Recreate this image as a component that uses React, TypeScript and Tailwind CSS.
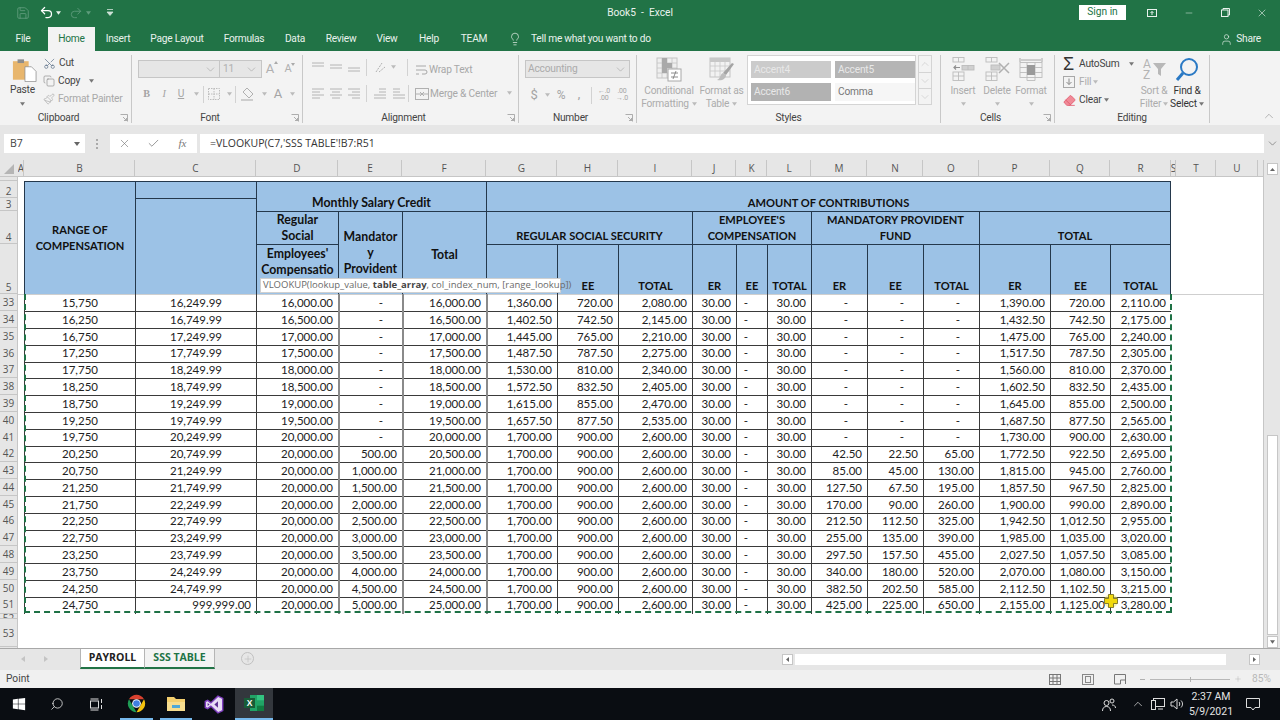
import React from "react";
import { Scissors, Copy, Paintbrush, Undo2, Redo2, Save, Lightbulb, User, X, Check, Search, Minus, Plus, ChevronUp, ChevronDown, Eraser } from "lucide-react";
import { FaWindows } from "react-icons/fa";

const Caret = ({ c = "#777", w = 6 }: { c?: string; w?: number }) => (
  <svg width={w} height={4} viewBox="0 0 6 4" className="shrink-0"><path d="M0 0h6L3 4z" fill={c} /></svg>
);

const Lines = ({ rows, w = 14, h = 12, c = "#b4b4b4" }: { rows: number[][]; w?: number; h?: number; c?: string }) => (
  <svg width={w} height={h} viewBox={`0 0 ${w} ${h}`} className="shrink-0">
    {rows.map((r, i) => <line key={i} x1={r[0]} x2={r[1]} y1={r[2]} y2={r[2]} stroke={c} strokeWidth="1" />)}
  </svg>
);

const Sep = () => <div className="w-px h-[17px] bg-[#d2d2d2] shrink-0" />;

const Group = ({ cls, label, launcher = true, children }: { cls: string; label: string; launcher?: boolean; children: React.ReactNode }) => (
  <div className={`flex flex-col shrink-0 h-[68px] mt-[4px] border-r border-[#c8c8c8] ${cls}`}>
    <div className="h-[56px] flex">{children}</div>
    <div className="h-[12px] flex items-center translate-y-[1px]">
      <div className="flex-1 text-center text-[10.2px] leading-none text-[#444]">{label}</div>
      {launcher && (
        <div className="w-[14px] flex justify-center">
          <svg width="8" height="8" viewBox="0 0 8 8"><path d="M.5 .5h7v7M3 3l3.5 3.5M6.5 4v2.5H4" fill="none" stroke="#9a9a9a" strokeWidth=".8" /></svg>
        </div>
      )}
    </div>
  </div>
);

const BigBtn = ({ cls, icon, l1, l2, caret2, caretRow }: { cls: string; icon: React.ReactNode; l1: string; l2?: string; caret2?: boolean; caretRow?: boolean }) => (
  <div className={`flex flex-col items-center shrink-0 ${cls}`}>
    <div className="h-[29px] pt-[2px] flex items-start justify-center">{icon}</div>
    <div className="h-[13px] leading-[13px] text-[10.2px] text-[#acacac] whitespace-nowrap">{l1}</div>
    {l2 && (
      <div className="h-[13px] leading-[13px] text-[10.2px] text-[#acacac] whitespace-nowrap flex items-center gap-[3px]">{l2}{caret2 && <Caret c="#bbb" w={5} />}</div>
    )}
    {caretRow && <div className="h-[13px] flex items-center"><Caret c="#bbb" w={5} /></div>}
  </div>
);

const Slot = ({ cls, children }: { cls: string; children: React.ReactNode }) => (
  <div className={`flex items-center justify-center shrink-0 h-[18px] ${cls}`}>{children}</div>
);

const CondIcon = () => (
  <svg width="26" height="25" viewBox="0 0 26 25">
    <rect x="1" y="1" width="20" height="20" fill="#efefef" stroke="#c4c4c4" />
    <path d="M1 6h20M1 11h20M1 16h20M6 1v20M11 1v20M16 1v20" stroke="#c4c4c4" strokeWidth=".8" />
    <rect x="6" y="1" width="5" height="15" fill="#a9a9a9" /><rect x="11" y="6" width="5" height="5" fill="#a9a9a9" />
    <rect x="12" y="12" width="13" height="12" fill="#fff" stroke="#a8a8a8" />
    <path d="M15 16h7M15 20h7M20 14l-3 8" stroke="#808080" strokeWidth=".9" />
  </svg>
);
const TableIcon = () => (
  <svg width="26" height="25" viewBox="0 0 26 25">
    <rect x="1" y="1" width="20" height="19" fill="#f2f2f2" stroke="#c4c4c4" />
    <rect x="1" y="1" width="20" height="4" fill="#c8c8c8" />
    <path d="M1 9h20M1 14h20M6 1v19M11 1v19M16 1v19" stroke="#c8c8c8" strokeWidth=".8" />
    <path d="M25 7l-2-1-9 10 3 2z" fill="#a4a4a4" /><path d="M14 16c-3 1-2 5-6 7 5 1 9-1 9-5z" fill="#bdbdbd" />
  </svg>
);
const InsIcon = () => (
  <svg width="24" height="24" viewBox="0 0 24 24" fill="none" stroke="#bcbcbc" strokeWidth=".9">
    <rect x="2" y=".5" width="11" height="4.5" /><path d="M7.500 .5v4.500" />
    <path d="M9 10.500H3M5 8.500l-2 2 2 2" stroke="#8f8f8f" strokeWidth="1.2" />
    <rect x="11" y="8.500" width="12" height="4.500" fill="#d0d0d0" /><path d="M17 8.500v4.500" />
    <rect x="2" y="15" width="11" height="8.500" /><path d="M7.500 15v8.500M2 19h11" />
  </svg>
);
const DelIcon = () => (
  <svg width="26" height="24" viewBox="0 0 26 24" fill="none" stroke="#bcbcbc" strokeWidth=".9">
    <rect x="2" y=".5" width="11" height="4.500" /><path d="M7.500 .5v4.500" />
    <rect x="7" y="8" width="9" height="5" fill="#d0d0d0" />
    <path d="M15 6l10 10M25 6L15 16" stroke="#b0b0b0" strokeWidth="1.500" />
    <rect x="2" y="15" width="11" height="8.500" /><path d="M7.500 15v8.500M2 19h11" />
  </svg>
);
const FmtIcon = () => (
  <svg width="24" height="25" viewBox="0 0 24 25" fill="none" stroke="#bcbcbc" strokeWidth=".9">
    <path d="M1 1v4M23 1v4M2 3h20" stroke="#9f9f9f" />
    <rect x="1" y="5.500" width="22" height="15" /><path d="M8 5.500v15M16 5.500v15M1 10.500h22M1 15.500h22" />
    <rect x="8" y="8" width="8" height="10" fill="#9a9a9a" stroke="none" />
    <path d="M8 20.500v3h8v-3" />
  </svg>
);

const ROWS: string[][] = [
  ["33","15,750","16,249.99","16,000.00","-","16,000.00","1,360.00","720.00","2,080.00","-","-","-","1,390.00","720.00","2,110.00"],
  ["34","16,250","16,749.99","16,500.00","-","16,500.00","1,402.50","742.50","2,145.00","-","-","-","1,432.50","742.50","2,175.00"],
  ["35","16,750","17,249.99","17,000.00","-","17,000.00","1,445.00","765.00","2,210.00","-","-","-","1,475.00","765.00","2,240.00"],
  ["36","17,250","17,749.99","17,500.00","-","17,500.00","1,487.50","787.50","2,275.00","-","-","-","1,517.50","787.50","2,305.00"],
  ["37","17,750","18,249.99","18,000.00","-","18,000.00","1,530.00","810.00","2,340.00","-","-","-","1,560.00","810.00","2,370.00"],
  ["38","18,250","18,749.99","18,500.00","-","18,500.00","1,572.50","832.50","2,405.00","-","-","-","1,602.50","832.50","2,435.00"],
  ["39","18,750","19,249.99","19,000.00","-","19,000.00","1,615.00","855.00","2,470.00","-","-","-","1,645.00","855.00","2,500.00"],
  ["40","19,250","19,749.99","19,500.00","-","19,500.00","1,657.50","877.50","2,535.00","-","-","-","1,687.50","877.50","2,565.00"],
  ["41","19,750","20,249.99","20,000.00","-","20,000.00","1,700.00","900.00","2,600.00","-","-","-","1,730.00","900.00","2,630.00"],
  ["42","20,250","20,749.99","20,000.00","500.00","20,500.00","1,700.00","900.00","2,600.00","42.50","22.50","65.00","1,772.50","922.50","2,695.00"],
  ["43","20,750","21,249.99","20,000.00","1,000.00","21,000.00","1,700.00","900.00","2,600.00","85.00","45.00","130.00","1,815.00","945.00","2,760.00"],
  ["44","21,250","21,749.99","20,000.00","1,500.00","21,500.00","1,700.00","900.00","2,600.00","127.50","67.50","195.00","1,857.50","967.50","2,825.00"],
  ["45","21,750","22,249.99","20,000.00","2,000.00","22,000.00","1,700.00","900.00","2,600.00","170.00","90.00","260.00","1,900.00","990.00","2,890.00"],
  ["46","22,250","22,749.99","20,000.00","2,500.00","22,500.00","1,700.00","900.00","2,600.00","212.50","112.50","325.00","1,942.50","1,012.50","2,955.00"],
  ["47","22,750","23,249.99","20,000.00","3,000.00","23,000.00","1,700.00","900.00","2,600.00","255.00","135.00","390.00","1,985.00","1,035.00","3,020.00"],
  ["48","23,250","23,749.99","20,000.00","3,500.00","23,500.00","1,700.00","900.00","2,600.00","297.50","157.50","455.00","2,027.50","1,057.50","3,085.00"],
  ["49","23,750","24,249.99","20,000.00","4,000.00","24,000.00","1,700.00","900.00","2,600.00","340.00","180.00","520.00","2,070.00","1,080.00","3,150.00"],
  ["50","24,250","24,749.99","20,000.00","4,500.00","24,500.00","1,700.00","900.00","2,600.00","382.50","202.50","585.00","2,112.50","1,102.50","3,215.00"],
  ["51","24,750","999,999.00","20,000.00","5,000.00","25,000.00","1,700.00","900.00","2,600.00","425.00","225.00","650.00","2,155.00","1,125.00","3,280.00"],
];

const GRID = "grid grid-cols-[18px_6px_111px_121px_82px_64px_84px_71px_61px_74px_44px_31px_44px_56px_56px_56px_71px_60px_61px]";

const Letters: [string, string][] = [
  ["A","w-[6px]"],["B","w-[111px]"],["C","w-[121px]"],["D","w-[82px]"],["E","w-[64px]"],["F","w-[84px]"],["G","w-[71px]"],["H","w-[61px]"],["I","w-[74px]"],["J","w-[44px]"],["K","w-[31px]"],["L","w-[44px]"],["M","w-[56px]"],["N","w-[56px]"],["O","w-[56px]"],["P","w-[71px]"],["Q","w-[60px]"],["R","w-[61px]"],["S","w-[5px]"],["T","w-[40px]"],["U","w-[42px]"],
];

const Num = ({ v, last, grey }: { v: string; last: boolean; grey?: boolean }) => (
  <div className={`${grey ? "border-l-[2px] border-[#8a8a8a]" : "border-l border-[#3a3a3a]"} ${last ? "" : "shadow-[0_1px_0_#3a3a3a]"} flex items-center justify-end overflow-hidden ${v === "-" ? "pr-[19px]" : "pr-[5px]"}`}>{v}</div>
);

const Ctr = ({ v, last }: { v: string; last: boolean }) => (
  <div className={`border-l border-[#3a3a3a] ${last ? "" : "shadow-[0_1px_0_#3a3a3a]"} flex items-center justify-center`}>{v}</div>
);

const RH = ({ n, cls }: { n: string; cls: string }) => (
  <div className={`bg-[#e6e6e6] border-b border-r border-[#c6c6c6] text-[10px] text-[#555] flex justify-center leading-none overflow-hidden font-['Open_Sans',sans-serif] ${cls}`}>{n}</div>
);

const H = "bg-[#9cc2e6] border-l border-t border-[#24384c] flex flex-col items-center text-center font-bold leading-[16px] text-[#111] text-[12.3px]";
const U = "bg-[#9cc2e6] border-l border-t border-[#24384c] flex flex-col items-center text-center font-bold leading-[16px] text-[#111] text-[11.1px]";

export default function App() {
  return (
    <div className="w-[1280px] h-[720px] overflow-hidden flex flex-col bg-white font-['Roboto',sans-serif] text-[#444]">
      {/* Title bar */}
      <div className="h-[25px] shrink-0 bg-[#217346] grid grid-cols-[1fr_auto_1fr] items-center text-[#e9f2ed]">
        <div className="flex items-center pl-[16px]">
          <Save size={14} strokeWidth={1.3} className="text-[#6aa386]" />
          <div className="w-[9px]" />
          <Undo2 size={15} strokeWidth={2} className="text-white" />
          <div className="ml-[2px]"><Caret c="#e9f2ed" w={5} /></div>
          <div className="w-[8px]" />
          <Redo2 size={14} strokeWidth={1.5} className="text-[#5f9c7d]" />
          <div className="ml-[3px]"><Caret c="#5f9c7d" w={5} /></div>
          <div className="w-[15px]" />
          <svg width="8" height="7" viewBox="0 0 8 7"><path d="M1 .5h6M1 3h6L4 6.500z" stroke="#cfe2d8" fill="#cfe2d8" strokeWidth=".8" /></svg>
        </div>
        <div className="text-[10.2px] whitespace-pre">Book5  -  Excel</div>
        <div className="flex items-center justify-end">
          <div className="w-[47px] h-[15px] bg-white text-[#217346] text-[10.2px] flex items-center justify-center leading-none">Sign in</div>
          <div className="w-[21px]" />
          <svg width="10" height="8" viewBox="0 0 10 8" fill="none" stroke="#e9f2ed"><rect x=".5" y=".5" width="9" height="7" /><path d="M5 6V2.500M3.500 4L5 2.500 6.500 4" /></svg>
          <div className="w-[27px]" />
          <Minus size={10} strokeWidth={1.2} />
          <div className="w-[27px]" />
          <svg width="9" height="9" viewBox="0 0 9 9" fill="none" stroke="#e9f2ed"><rect x=".5" y="2" width="6.500" height="6.500" /><path d="M2 2V.5h6.500V7H7" /></svg>
          <div className="w-[26px]" />
          <X size={12} strokeWidth={1.2} />
          <div className="w-[12px]" />
        </div>
      </div>

      {/* Tabs */}
      <div className="h-[26px] shrink-0 bg-[#217346] pt-[2px] flex items-stretch text-[10.2px] tracking-[-0.25px] text-[#e9f2ed] whitespace-nowrap">
        <div className="w-[46px] flex items-center justify-center">File</div>
        <div className="w-[2px]" />
        <div className="w-[47px] bg-[#f3f3f3] text-[#217346] flex items-center justify-center">Home</div>
        <div className="w-[46px] flex items-center justify-center">Insert</div>
        <div className="w-[72px] flex items-center justify-center">Page Layout</div>
        <div className="w-[62px] flex items-center justify-center">Formulas</div>
        <div className="w-[40px] flex items-center justify-center">Data</div>
        <div className="w-[52px] flex items-center justify-center">Review</div>
        <div className="w-[40px] flex items-center justify-center">View</div>
        <div className="w-[44px] flex items-center justify-center">Help</div>
        <div className="w-[46px] flex items-center justify-center">TEAM</div>
        <div className="w-[11px]" />
        <div className="flex items-center"><Lightbulb size={14} strokeWidth={1.2} /></div>
        <div className="w-[9px]" />
        <div className="flex items-center">Tell me what you want to do</div>
        <div className="flex-1" />
        <div className="flex items-center gap-[3px] pr-[19px]"><User size={13} strokeWidth={1.2} />Share</div>
      </div>

      {/* Ribbon */}
      <div className="h-[74px] shrink-0 bg-[#f3f3f3] flex text-[10.2px] tracking-[-0.2px]">
        <Group cls="w-[132px]" label="Clipboard">
          <div className="w-[43px] pl-[2px] flex flex-col items-center">
            <svg width="25" height="24" viewBox="0 0 27 25" className="mt-[3px] ml-[3px]">
              <rect x="1" y="3" width="17" height="20" fill="#e8b66d" />
              <rect x="6" y="1" width="7" height="4" fill="#8d8d8d" />
              <path d="M14 9h7l5 5v11H14z" fill="#fff" stroke="#8b8b8b" strokeWidth=".8" />
            </svg>
            <div className="leading-none mt-[3px] text-[#444]">Paste</div>
            <div className="mt-[7px]"><Caret c="#777" w={5} /></div>
          </div>
          <div className="flex flex-col -mt-[1px] whitespace-nowrap">
            <div className="h-[18px] flex items-center gap-[3px]"><Scissors size={13} strokeWidth={1.1} className="text-[#49617c] -rotate-90" /><span>Cut</span></div>
            <div className="h-[18px] flex items-center gap-[3px]"><Copy size={12} strokeWidth={1.1} className="text-[#777]" /><span>Copy</span><span className="ml-[6px]"><Caret w={5} /></span></div>
            <div className="h-[18px] flex items-center gap-[3px] text-[#a8a8a8]"><Paintbrush size={12} strokeWidth={1.3} /><span>Format Painter</span></div>
          </div>
        </Group>

        <Group cls="w-[171px]" label="Font">
          <div className="pl-[6px] flex flex-col">
            <div className="flex items-center mt-[5px] h-[18px]">
              <div className="w-[82px] h-[18px] bg-[#e6e6e6] border border-[#c6c6c6] flex items-center justify-end pr-[2px]"><ChevronDown size={13} strokeWidth={1} className="text-[#999]" /></div>
              <div className="w-[42px] h-[18px] bg-[#e6e6e6] border border-l-0 border-[#c6c6c6] flex items-center justify-between px-[3px] text-[#b0b0b0]">11<ChevronDown size={13} strokeWidth={1} className="text-[#999]" /></div>
              <div className="w-[18px] ml-[1px] flex justify-center items-start text-[13px] text-[#b0b0b0]">A<svg width="4" height="3" viewBox="0 0 4 3" className="mt-[2px]"><path d="M0 3l2-3 2 3" fill="#aaa" /></svg></div>
              <div className="w-[18px] flex justify-center items-start text-[11px] text-[#b0b0b0]">A<svg width="4" height="3" viewBox="0 0 4 3" className="mt-[2px]"><path d="M0 0l2 3 2-3" fill="#aaa" /></svg></div>
            </div>
            <div className="flex items-center mt-[7px] h-[18px] text-[#a4a4a4]">
              <Slot cls="w-[17px] font-bold font-['Liberation_Serif',serif]">B</Slot>
              <Slot cls="w-[18px] italic font-['Liberation_Serif',serif]">I</Slot>
              <Slot cls="w-[16px] underline">U</Slot>
              <Slot cls="w-[14px]"><Caret c="#bbb" w={5} /></Slot>
              <Sep />
              <Slot cls="w-[19px]"><svg width="12" height="12" viewBox="0 0 12 12" fill="none" stroke="#bcbcbc"><path d="M.5 .5h11v11H.5zM6 .5v11M.5 6h11" strokeDasharray="1.500 1" /></svg></Slot>
              <Slot cls="w-[12px]"><Caret c="#bbb" w={5} /></Slot>
              <Sep />
              <Slot cls="w-[22px]"><svg width="15" height="14" viewBox="0 0 15 14"><path d="M7 1l6 6-4 4-6-6z" fill="none" stroke="#b0b0b0" /><rect x="1" y="12" width="12" height="2" fill="#cdcdcd" /></svg></Slot>
              <Slot cls="w-[12px]"><Caret c="#bbb" w={5} /></Slot>
              <Slot cls="w-[16px] text-[13px]">A</Slot>
              <Slot cls="w-[12px]"><Caret c="#bbb" w={5} /></Slot>
            </div>
          </div>
        </Group>

        <Group cls="w-[216px]" label="Alignment">
          <div className="pl-[6px] flex flex-col">
            <div className="flex items-center mt-[3px] h-[18px]">
              <Slot cls="w-[18px]"><Lines rows={[[1,13,2],[1,13,5]]} /></Slot>
              <Slot cls="w-[18px]"><Lines rows={[[1,13,4],[1,13,7]]} /></Slot>
              <Slot cls="w-[18px]"><Lines rows={[[1,13,7],[1,13,10]]} /></Slot>
              <div className="w-[3px]" /><Sep />
              <Slot cls="w-[22px] pl-[4px]"><svg width="13" height="13" viewBox="0 0 13 13" fill="none" stroke="#b0b0b0"><path d="M2 11L8 2M5 11l6-5" strokeDasharray="2 1" /></svg></Slot>
              <Slot cls="w-[9px]"><Caret c="#bbb" w={5} /></Slot>
              <div className="w-[9px]" /><Sep />
              <div className="w-[7px]" />
              <svg width="13" height="13" viewBox="0 0 13 13" fill="none" stroke="#a8a8a8" className="mt-[6px]"><path d="M1 2h10M1 6h9a2 2 0 010 4H7M1 10h3" /></svg>
              <span className="ml-[1px] mt-[6px] text-[#a8a8a8]">Wrap Text</span>
            </div>
            <div className="flex items-center mt-[8px] h-[18px]">
              <Slot cls="w-[18px]"><Lines rows={[[1,13,2],[1,9,5],[1,13,8],[1,9,11]]} /></Slot>
              <Slot cls="w-[18px]"><Lines rows={[[1,13,2],[3,11,5],[1,13,8],[3,11,11]]} /></Slot>
              <Slot cls="w-[18px]"><Lines rows={[[1,13,2],[5,13,5],[1,13,8],[5,13,11]]} /></Slot>
              <div className="w-[3px]" /><Sep /><div className="w-[3px]" />
              <Slot cls="w-[19px]"><Lines rows={[[6,13,2],[6,13,5],[1,13,8],[1,13,11]]} /></Slot>
              <Slot cls="w-[19px]"><Lines rows={[[1,8,2],[1,8,5],[1,13,8],[1,13,11]]} /></Slot>
              <Sep />
              <div className="w-[6px]" />
              <svg width="14" height="14" viewBox="0 0 14 14" fill="none" stroke="#b0b0b0" className="mt-[2px]"><rect x=".5" y="1.500" width="13" height="11" /><path d="M.5 7h13M5 5L7 7 5 9M9 5L7 7l2 2" /></svg>
              <span className="ml-[1px] mt-[2px] text-[#a8a8a8] whitespace-nowrap">Merge &amp; Center</span>
              <span className="ml-[10px]"><Caret c="#bbb" w={5} /></span>
            </div>
          </div>
        </Group>

        <Group cls="w-[118px]" label="Number">
          <div className="pl-[6px] flex flex-col">
            <div className="w-[105px] h-[18px] mt-[5px] bg-[#e6e6e6] border border-[#c6c6c6] flex items-center justify-between px-[2px] text-[#ababab]">Accounting<ChevronDown size={13} strokeWidth={1} className="text-[#999]" /></div>
            <div className="flex items-center mt-[8px] h-[18px] text-[#a4a4a4]">
              <Slot cls="w-[18px] text-[13px]">$</Slot>
              <Slot cls="w-[9px]"><Caret c="#bbb" w={5} /></Slot>
              <Slot cls="w-[18px] text-[12px]">%</Slot>
              <Slot cls="w-[18px] font-bold">,</Slot>
              <div className="w-[3px]" /><Sep /><div className="w-[3px]" />
              <Slot cls="w-[18px] text-[7px] leading-[7px] text-center"><span>←.0<br />.00</span></Slot>
              <Slot cls="w-[18px] text-[7px] leading-[7px] text-center"><span>.00<br />→.0</span></Slot>
            </div>
          </div>
        </Group>

        <Group cls="w-[304px]" label="Styles" launcher={false}>
          <div className="w-[5px]" />
          <BigBtn cls="w-[54px]" icon={<CondIcon />} l1="Conditional" l2="Formatting" caret2 />
          <BigBtn cls="w-[51px]" icon={<TableIcon />} l1="Format as" l2="Table" caret2 />
          <div className="w-[169px] h-[50px] bg-white border border-[#d4d4d4] grid grid-cols-[80px_80px] gap-x-[4px] gap-y-[5px] content-start pl-[3px] pt-[5px] text-[#e8e8e8] text-[10.2px]">
            <div className="h-[17px] bg-[#cbcbcb] flex items-center px-[3px]">Accent4</div>
            <div className="h-[17px] bg-[#b5b5b5] flex items-center px-[3px]">Accent5</div>
            <div className="h-[18px] bg-[#b2b2b2] flex items-center px-[3px]">Accent6</div>
            <div className="h-[18px] bg-[#f6f6f6] flex items-center px-[3px] text-[#777]">Comma</div>
          </div>
          <div className="w-[14px] h-[50px] ml-[2px] border border-[#d4d4d4] flex flex-col items-center text-[#bbb]">
            <div className="h-[16px] flex items-center"><ChevronUp size={12} strokeWidth={1} /></div>
            <div className="h-[16px] w-full flex items-center justify-center border-t border-[#d4d4d4]"><ChevronDown size={12} strokeWidth={1} /></div>
            <div className="h-[16px] w-full flex items-center justify-center border-t border-[#d4d4d4]"><ChevronDown size={12} strokeWidth={1} /></div>
          </div>
        </Group>

        <Group cls="w-[114px]" label="Cells">
          <div className="w-[5px]" />
          <BigBtn cls="w-[34px]" icon={<InsIcon />} l1="Insert" caretRow />
          <BigBtn cls="w-[34px]" icon={<DelIcon />} l1="Delete" caretRow />
          <BigBtn cls="w-[34px]" icon={<FmtIcon />} l1="Format" caretRow />
        </Group>

        <Group cls="w-[155px]" label="Editing" launcher={false}>
          <div className="w-[8px]" />
          <div className="w-[76px] flex flex-col">
            <div className="h-[18px] flex items-center">
              <span className="w-[16px] text-[18px] leading-none text-[#333] font-['Liberation_Sans',sans-serif]">Σ</span>
              <span className="text-[#444]">AutoSum</span><span className="ml-[10px]"><Caret w={5} /></span>
            </div>
            <div className="h-[18px] flex items-center text-[#acacac]">
              <span className="w-[16px]"><svg width="12" height="12" viewBox="0 0 12 12" fill="none" stroke="#a8a8a8"><rect x=".5" y=".5" width="11" height="11" /><path d="M6 2.500v6M3.500 6L6 8.500 8.500 6" stroke="#8a8a8a" /></svg></span>
              <span>Fill</span><span className="ml-[2px]"><Caret c="#bbb" w={5} /></span>
            </div>
            <div className="h-[18px] flex items-center">
              <span className="w-[16px]"><Eraser size={13} strokeWidth={1.5} className="text-[#e0566b]" fill="#f08a97" /></span>
              <span className="text-[#444]">Clear</span><span className="ml-[2px]"><Caret w={5} /></span>
            </div>
          </div>
          <div className="w-[30px] flex flex-col items-center">
            <div className="h-[29px] pt-[1px]">
              <svg width="25" height="27" viewBox="0 0 25 27"><text x="1" y="12" fontSize="12" fill="#b4b4b4">A</text><text x="1" y="23" fontSize="12" fill="#b4b4b4">Z</text><path d="M11 7h13l-5 6v7l-3-2v-5z" fill="#b8b8b8" /></svg>
            </div>
            <div className="h-[13px] leading-[13px] text-[#acacac] whitespace-nowrap">Sort &amp;</div>
            <div className="h-[13px] leading-[13px] text-[#acacac] whitespace-nowrap flex items-center gap-[2px]">Filter<Caret c="#bbb" w={5} /></div>
          </div>
          <div className="w-[36px] flex flex-col items-center">
            <div className="h-[29px] pt-[2px]">
              <svg width="24" height="25" viewBox="0 0 24 25" fill="none"><circle cx="14" cy="10" r="8" stroke="#2a79c4" strokeWidth="2" /><path d="M8 16l-6 7" stroke="#2a79c4" strokeWidth="3" /></svg>
            </div>
            <div className="h-[13px] leading-[13px] text-[#333] whitespace-nowrap">Find &amp;</div>
            <div className="h-[13px] leading-[13px] text-[#333] whitespace-nowrap flex items-center gap-[2px]">Select<Caret w={5} /></div>
          </div>
        </Group>

        <div className="flex-1 flex items-end justify-end pr-[4px] pb-[2px]"><ChevronUp size={14} strokeWidth={1} className="text-[#888]" /></div>
      </div>

      <div className="h-[5px] shrink-0 bg-[#e6e6e6]" />

      {/* Formula bar */}
      <div className="h-[30px] shrink-0 bg-[#e6e6e6] flex items-start pt-[4px] font-['Open_Sans',sans-serif]">
        <div className="w-[4px]" />
        <div className="w-[81px] h-[19px] bg-white flex items-center justify-between pl-[6px] pr-[5px] text-[10.5px]">B7<Caret c="#666" w={6} /></div>
        <div className="w-[25px] h-[19px] flex flex-col items-center justify-center gap-[2px] pr-[2px]">
          <div className="w-[2px] h-[2px] bg-[#aaa]" /><div className="w-[2px] h-[2px] bg-[#aaa]" /><div className="w-[2px] h-[2px] bg-[#aaa]" />
        </div>
        <div className="w-[87px] h-[19px] bg-white flex items-center text-[#777]">
          <div className="w-[29px] flex justify-center"><X size={13} strokeWidth={1.2} /></div>
          <div className="w-[29px] flex justify-center"><Check size={13} strokeWidth={1.4} /></div>
          <div className="w-[29px] flex justify-center italic text-[11px] font-['Liberation_Serif',serif]">fx</div>
        </div>
        <div className="w-[3px]" />
        <div className="w-[1064px] h-[19px] bg-white flex items-center pl-[10px] text-[10.5px] text-[#333]">=VLOOKUP(C7,'SSS TABLE'!B7:R51</div>
        <div className="flex-1 h-[19px] flex items-center justify-center"><ChevronDown size={13} strokeWidth={1.2} className="text-[#666]" /></div>
      </div>

      {/* Sheet area with vertical scrollbar */}
      <div className="h-[488px] shrink-0 flex">
        <div className="w-[1263px] flex flex-col border-r border-[#c6c6c6] box-content">
          <div className="h-[17px] shrink-0 flex bg-[#e6e6e6] text-[10px] text-[#555] border-b border-[#c6c6c6] font-['Open_Sans',sans-serif]">
            <div className="w-[18px] flex items-end justify-center pb-[2px]"><svg width="10" height="10" viewBox="0 0 10 10"><path d="M10 0v10H0z" fill="#b5b5b5" /></svg></div>
            {Letters.map(([l, w]) => (
              <div key={l} className={`${w} flex items-center justify-center border-r border-[#c6c6c6] overflow-hidden pl-px`}>{l}</div>
            ))}
          </div>

          <div className="relative h-[471px] shrink-0 flex flex-col overflow-hidden font-['Lato',sans-serif] text-[11.5px] text-[#222]">
            {/* Frozen header */}
            <div className={`${GRID} grid-rows-[4px_17px_12.5px_33px_50.5px] shadow-[0_1px_0_#cfcfcf] shrink-0`}>
              <RH n="" cls="col-start-1 row-start-1" />
              <RH n="2" cls="col-start-1 row-start-2 items-end pb-[1px]" />
              <RH n="3" cls="col-start-1 row-start-3 items-center" />
              <RH n="4" cls="col-start-1 row-start-4 items-end pb-[1px]" />
              <RH n="5" cls="col-start-1 row-start-5 items-end pb-[1px]" />

              <div className={`${U} col-start-3 row-start-2 row-end-6 justify-center`}>RANGE OF<br />COMPENSATION</div>
              <div className={`${H} col-start-4 row-start-2`} />
              <div className={`${H} col-start-4 row-start-3 row-end-6`} />
              <div className={`${H} col-start-5 col-end-8 row-start-2 row-end-4 justify-end leading-[14px]`}>Monthly Salary Credit</div>
              <div className={`${U} col-start-8 col-end-20 row-start-2 row-end-4 justify-end border-r`}>AMOUNT OF CONTRIBUTIONS</div>

              <div className={`${H} col-start-5 row-start-4 justify-center pt-[1px]`}>Regular<br />Social</div>
              <div className={`${H} col-start-6 row-start-4 row-end-6 justify-center leading-[16.5px]`}>Mandator<br />y<br />Provident</div>
              <div className={`${H} col-start-7 row-start-4 row-end-6 justify-center pt-[4px]`}>Total</div>
              <div className={`${U} col-start-8 col-end-11 row-start-4 justify-end`}>REGULAR SOCIAL SECURITY</div>
              <div className={`${U} col-start-11 col-end-14 row-start-4 justify-center`}>EMPLOYEE'S<br />COMPENSATION</div>
              <div className={`${U} col-start-14 col-end-17 row-start-4 justify-center`}>MANDATORY PROVIDENT<br />FUND</div>
              <div className={`${U} col-start-17 col-end-20 row-start-4 justify-end border-r leading-[14px]`}>TOTAL</div>

              <div className={`${H} col-start-5 row-start-5 justify-start pt-[1px]`}>Employees'<br />Compensatio</div>
              {[
                ["","col-start-8"],["EE","col-start-9"],["TOTAL","col-start-10"],["ER","col-start-11"],["EE","col-start-12"],["TOTAL","col-start-13"],["ER","col-start-14"],["EE","col-start-15"],["TOTAL","col-start-16"],["ER","col-start-17"],["EE","col-start-18"],["TOTAL","col-start-19 border-r"],
              ].map(([t, c]) => (
                <div key={c} className={`${U} ${c} row-start-5 justify-end leading-[14px]`}>{t}</div>
              ))}
            </div>

            {/* Data rows */}
            <div className="relative shrink-0">
              {ROWS.map((r) => {
                const last = r[0] === "51";
                return (
                  <div key={r[0]} className={`${GRID} h-[16.8px]`}>
                    <RH n={r[0]} cls="items-center" />
                    <div />
                    <Ctr v={r[1]} last={last} />
                    {last ? <Num v={r[2]} last={last} /> : <Ctr v={r[2]} last={last} />}
                    <Num v={r[3]} last={last} />
                    <Num v={r[4]} last={last} grey />
                    <Num v={r[5]} last={last} grey />
                    <Num v={r[6]} last={last} grey />
                    <Num v={r[7]} last={last} />
                    <Num v={r[8]} last={last} />
                    <Num v="30.00" last={last} />
                    <Num v="-" last={last} />
                    <Num v="30.00" last={last} />
                    <Num v={r[9]} last={last} />
                    <Num v={r[10]} last={last} />
                    <Num v={r[11]} last={last} />
                    <Num v={r[12]} last={last} />
                    <Num v={r[13]} last={last} />
                    <Num v={r[14]} last={last} />
                  </div>
                );
              })}
              {/* Copy-range marching ants */}
              <div className="absolute top-0 bottom-0 left-[24px] w-[1148px] border-l-2 border-r-2 border-b-2 border-dashed border-[#1e7145] pointer-events-none" />
              {/* Cross cursor */}
              <svg width="16" height="16" viewBox="0 0 16 16" className="absolute left-[1103px] top-[299px]">
                <circle cx="8" cy="8" r="7" fill="#f7ef6a" opacity=".55" />
                <path d="M5.500 1.500h5v4h4v5h-4v4h-5v-4h-4v-5h4z" fill="#f2d90c" stroke="#6c6520" strokeWidth=".8" />
              </svg>
            </div>

            {/* Rows below the table */}
            <div className="flex-1 flex flex-col w-[18px]">
              <RH n="52" cls="h-[6px] shrink-0 items-start" />
              <RH n="53" cls="h-[28px] shrink-0 items-center" />
              <RH n="54" cls="flex-1 items-start" />
            </div>

            {/* Formula tooltip */}
            <div className="absolute left-[260px] top-[101px] w-[301px] h-[15px] bg-white border border-[#d0d0d0] flex items-center pl-[2px] font-['Open_Sans',sans-serif] text-[9.5px] text-[#6a6a6a] whitespace-nowrap">
              VLOOKUP(lookup_value,&nbsp;<b className="text-[#444]">table_array</b>, col_index_num, [range_lookup])
            </div>
          </div>
        </div>

        {/* Vertical scrollbar */}
        <div className="flex-1 bg-[#e6e6e6] flex flex-col items-center pt-[3px] pl-[1px]">
          <div className="w-[11px] h-[12px] bg-white border border-[#c6c6c6] flex items-center justify-center"><svg width="5" height="3" viewBox="0 0 5 3"><path d="M0 3h5L2.500 0z" fill="#666" /></svg></div>
          <div className="h-[260px]" />
          <div className="w-[11px] h-[200px] bg-white border border-[#c6c6c6]" />
          <div className="w-[11px] h-[12px] mt-[1px] bg-white border border-[#c6c6c6] flex items-center justify-center"><Caret c="#666" w={5} /></div>
        </div>
      </div>

      {/* Sheet tabs */}
      <div className="h-[22px] shrink-0 bg-[#e6e6e6] border-t border-[#a8a8a8] flex items-start font-['Open_Sans',sans-serif]">
        <div className="w-[80px] h-[19px] flex items-center pl-[21px] gap-[19px]">
          <svg width="4" height="6" viewBox="0 0 4 6"><path d="M4 0v6L0 3z" fill="#c4c4c4" /></svg>
          <svg width="4" height="6" viewBox="0 0 4 6"><path d="M0 0v6l4-3z" fill="#c4c4c4" /></svg>
        </div>
        <div className="w-[65px] h-[20px] bg-white border-x border-b-2 border-x-[#b5b5b5] border-b-[#217346] flex items-center justify-center font-bold text-[10.5px] text-[#222]">PAYROLL</div>
        <div className="w-[70px] h-[20px] bg-[#f3f3f3] border-r border-b-2 border-r-[#b5b5b5] border-b-[#217346] flex items-center justify-center font-bold text-[10.5px] text-[#217346]">SSS TABLE</div>
        <div className="w-[26px]" />
        <div className="w-[13px] h-[13px] mt-[3px] rounded-full border border-[#c0c0c0] flex items-center justify-center"><Plus size={10} strokeWidth={1.6} className="text-[#c0c0c0]" /></div>
        <div className="w-[528px]" />
        <div className="w-[11px] h-[11px] mt-[5px] bg-white border border-[#c6c6c6] flex items-center justify-center"><svg width="3" height="5" viewBox="0 0 3 5"><path d="M3 0v5L0 2.500z" fill="#666" /></svg></div>
        <div className="w-[2px]" />
        <div className="w-[431px] h-[11px] mt-[5px] bg-white" />
        <div className="w-[23px]" />
        <div className="w-[11px] h-[11px] mt-[5px] bg-white border border-[#c6c6c6] flex items-center justify-center"><svg width="3" height="5" viewBox="0 0 3 5"><path d="M0 0v5l3-2.500z" fill="#666" /></svg></div>
      </div>

      {/* Status bar */}
      <div className="h-[18px] shrink-0 bg-[#f0f0f0] flex items-center text-[10.2px] text-[#444]">
        <div className="pl-[6px] w-[1049px]">Point</div>
        <svg width="12" height="11" viewBox="0 0 12 11" fill="none" stroke="#777"><rect x=".5" y=".5" width="11" height="10" /><path d="M4 .5v10M8 .5v10M.5 4h11M.5 7.500h11" /></svg>
        <div className="w-[21px]" />
        <svg width="12" height="11" viewBox="0 0 12 11" fill="none" stroke="#888"><rect x=".5" y=".5" width="11" height="10" /><rect x="3.500" y="2.500" width="5" height="6" /></svg>
        <div className="w-[20px]" />
        <svg width="12" height="11" viewBox="0 0 12 11" fill="none" stroke="#777"><path d="M.5 10V.5h11V10M.5 10h6V6h5" /></svg>
        <div className="w-[14px]" />
        <div className="w-[5px] h-px bg-[#b0b0b0]" />
        <div className="w-[5px]" />
        <div className="w-[80px] h-px bg-[#b8b8b8] flex justify-center items-center"><div className="w-px h-[5px] bg-[#b0b0b0]" /></div>
        <div className="w-[4px]" />
        <Plus size={8} strokeWidth={1.2} className="text-[#aaa]" />
        <div className="w-[10px]" />
        <span className="text-[#b8b8b8]">85%</span>
      </div>

      {/* Taskbar */}
      <div className="h-[32px] shrink-0 bg-[#0a0d12] flex items-stretch text-[#e4e4e4]">
        <div className="w-[38px] flex items-center justify-center"><FaWindows size={14} className="text-white" /></div>
        <div className="w-[38px] flex items-center justify-center"><Search size={14} strokeWidth={1.4} className="-scale-x-100 text-[#e4e4e4]" /></div>
        <div className="w-[40px] flex items-center justify-center">
          <svg width="14" height="13" viewBox="0 0 14 13" fill="none" stroke="#ddd"><rect x="1.500" y="3" width="8" height="7" /><path d="M1.500 1h8M1.500 12h8M12.500 1v4M12.500 7v4" /></svg>
        </div>
        <div className="w-[4px]" />
        <div className="w-[33px] flex items-center justify-center border-b-2 border-[#76b9ed]">
          <svg width="19" height="19" viewBox="0 0 24 24"><path d="M2.500 6.500a11 11 0 0119 0H12z" fill="#d9412f" /><path d="M21.500 6.500A11 11 0 0112 23l4.800-8.300z" fill="#f4c20d" /><path d="M12 23A11 11 0 012.500 6.500l4.800 8.300z" fill="#1f9d55" /><circle cx="12" cy="12" r="5.500" fill="#fff" /><circle cx="12" cy="12" r="4.200" fill="#3f7fe0" /></svg>
        </div>
        <div className="w-[7px]" />
        <div className="w-[32px] flex items-center justify-center border-b-2 border-[#76b9ed]">
          <svg width="18" height="15" viewBox="0 0 18 15"><path d="M0 1h7l2 2h9v12H0z" fill="#f4cf6e" /><rect x="0" y="6" width="18" height="9" fill="#f7dd8f" /><rect x="5" y="9" width="8" height="3" fill="#4fa8d8" /></svg>
        </div>
        <div className="w-[43px] flex items-center justify-center">
          <svg width="20" height="19" viewBox="0 0 24 24"><path d="M17 1.500l6 2.800v15.400l-6 2.800-9-8.500-4 3.200-3-1.400V8.200l3-1.400 4 3.200z" fill="#e8dcf5" stroke="#7f3fbf" strokeWidth="1.800" /><path d="M17 8l-4.500 4 4.500 4zM4 10v4l2.400-2z" fill="#5c2d91" /></svg>
        </div>
        <div className="w-[38px] bg-[#33373d] flex items-center justify-center border-b-2 border-[#76b9ed]">
          <svg width="20" height="16" viewBox="0 0 20 16"><rect x="6" y="0" width="14" height="16" fill="#21a366" /><rect x="13" y="0" width="7" height="5.300" fill="#33c481" /><rect x="13" y="10.700" width="7" height="5.300" fill="#107c41" /><rect x="0" y="3" width="11" height="10" fill="#185c37" /><text x="5.500" y="11" textAnchor="middle" fontSize="8.500" fontWeight="700" fill="#fff" fontFamily="Liberation Sans, sans-serif">X</text></svg>
        </div>
        <div className="flex-1" />
        <div className="flex items-center">
          <svg width="14" height="13" viewBox="0 0 14 13" fill="none" stroke="#ddd"><circle cx="4.500" cy="5" r="2.500" /><path d="M.5 13c0-3 1.500-4.500 4-4.500s4 1.500 4 4.500" /><circle cx="10" cy="3" r="2" /><path d="M10 7c2 0 3.500 1 3.500 3" /></svg>
          <div className="w-[15px]" />
          <ChevronUp size={14} strokeWidth={1.2} />
          <div className="w-[6px]" />
          <svg width="14" height="12" viewBox="0 0 14 12" fill="none" stroke="#ddd"><rect x="2.500" y=".5" width="11" height="8" /><rect x=".5" y="2.500" width="4" height="9" fill="#0a0d12" /><path d="M7 11h5" /></svg>
          <div className="w-[5px]" />
          <svg width="14" height="12" viewBox="0 0 14 12" fill="none" stroke="#ddd"><path d="M1 4v4h2.500L7 11V1L3.500 4zM9 4c1 1 1 3 0 4M11 2.500c2 2 2 5 0 7" /></svg>
          <div className="w-[6px]" />
          <div className="w-[42px] flex flex-col items-center text-[10.5px] leading-[15px] whitespace-nowrap">
            <span>2:37 AM</span><span>5/9/2021</span>
          </div>
          <div className="w-[14px]" />
          <svg width="14" height="13" viewBox="0 0 14 13" fill="none" stroke="#ddd"><path d="M.5 .5h13v9H9l-2 2.500L5 9.500H.5z" /></svg>
          <div className="w-[20px]" />
        </div>
      </div>
    </div>
  );
}
